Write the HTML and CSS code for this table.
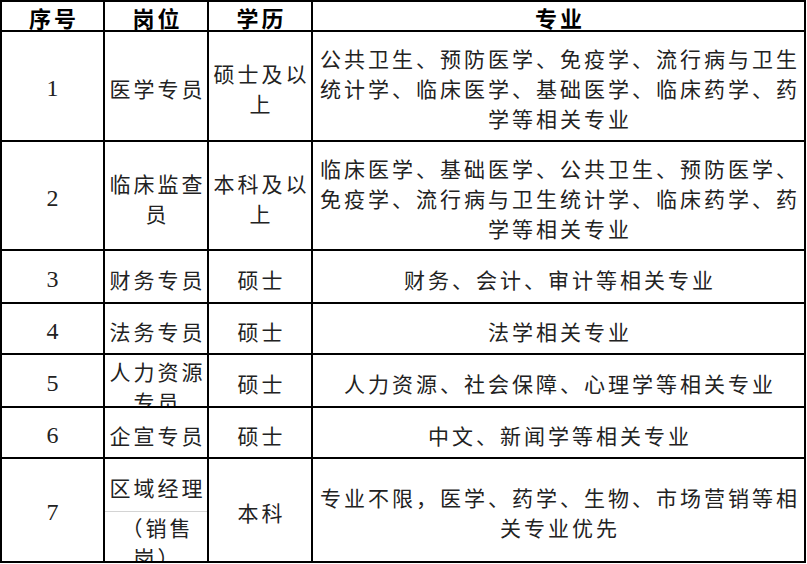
FILE: index.html
```html
<!DOCTYPE html>
<html lang="zh-CN">
<head>
<meta charset="utf-8">
<title>岗位需求</title>
<link rel="stylesheet" href="styles.css">
</head>
<body>
<div class="sheet">
  <div class="cell head">序号</div>
  <div class="cell head">岗位</div>
  <div class="cell head">学历</div>
  <div class="cell head">专业</div>

  <div class="cell num">1</div>
  <div class="cell">医学专员</div>
  <div class="cell">硕士及以上</div>
  <div class="cell">公共卫生、预防医学、免疫学、流行病与卫生统计学、临床医学、基础医学、临床药学、药学等相关专业</div>

  <div class="cell num">2</div>
  <div class="cell">临床监查员</div>
  <div class="cell">本科及以上</div>
  <div class="cell">临床医学、基础医学、公共卫生、预防医学、免疫学、流行病与卫生统计学、临床药学、药学等相关专业</div>

  <div class="cell num">3</div>
  <div class="cell">财务专员</div>
  <div class="cell">硕士</div>
  <div class="cell">财务、会计、审计等相关专业</div>

  <div class="cell num">4</div>
  <div class="cell">法务专员</div>
  <div class="cell">硕士</div>
  <div class="cell">法学相关专业</div>

  <div class="cell num">5</div>
  <div class="cell clip">人力资源专员</div>
  <div class="cell">硕士</div>
  <div class="cell">人力资源、社会保障、心理学等相关专业</div>

  <div class="cell num">6</div>
  <div class="cell">企宣专员</div>
  <div class="cell">硕士</div>
  <div class="cell">中文、新闻学等相关专业</div>

  <div class="cell num">7</div>
  <div class="cell split">
    <div class="part-top">区域经理</div>
    <div class="part-bottom">（销售岗）</div>
  </div>
  <div class="cell">本科</div>
  <div class="cell">专业不限，医学、药学、生物、市场营销等相关专业优先</div>
</div>
</body>
</html>
```

FILE: styles.css
```css
html, body {
  margin: 0;
  padding: 0;
  background: #ffffff;
}

.sheet {
  display: grid;
  grid-template-columns: 103px 104px 104px 493px;
  grid-template-rows: 30px 110px 109px 53px 51px 53px 51px 104px;
  width: max-content;
  border-top: 2px solid #000;
  border-left: 2px solid #000;
  font-family: "Noto Sans CJK SC", "Noto Sans CJK JP", sans-serif;
  font-size: 21px;
  letter-spacing: 3px;
  line-height: 30px;
  color: #222222;
}

.cell {
  box-sizing: border-box;
  border-right: 2px solid #000;
  border-bottom: 2px solid #000;
  display: flex;
  flex-direction: column;
  justify-content: safe center;
  align-items: center;
  text-align: center;
  overflow: hidden;
  padding: 4px 0 0 3px;
}

.head {
  font-weight: 700;
  font-size: 22px;
  line-height: 26px;
  color: #000;
  padding-top: 1px;
}

.num {
  font-family: "Liberation Serif", serif;
  font-size: 24px;
  letter-spacing: 0;
  padding-left: 0;
}

.clip {
  justify-content: flex-start;
  padding-top: 1px;
}

.split {
  justify-content: flex-start;
  align-items: stretch;
  padding: 0;
}

.part-top {
  box-sizing: border-box;
  height: 53px;
  flex: none;
  display: flex;
  align-items: center;
  justify-content: center;
  padding: 3px 0 0 3px;
  border-bottom: 1px solid #d4d4d4;
}

.part-bottom {
  box-sizing: border-box;
  flex: 1;
  padding: 0 0 0 3px;
  text-align: center;
  overflow: hidden;
}
```
